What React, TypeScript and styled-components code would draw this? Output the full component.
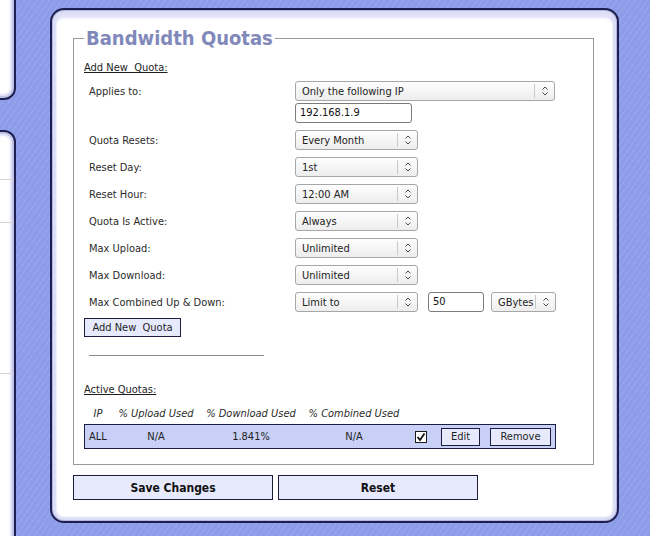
import React from "react";
import styled, { createGlobalStyle } from "styled-components";

const GlobalStyle = createGlobalStyle`
  html, body {
    margin: 0;
    padding: 0;
  }
  body {
    font-family: "DejaVu Sans Condensed", "DejaVu Sans", sans-serif;
    font-size: 11px;
    color: #2b2b2b;
  }
`;

const Page = styled.div`
  width: 650px;
  height: 536px;
  overflow: hidden;
  display: flex;
  align-items: flex-start;
  background-color: #8d9ce8;
  background-image: repeating-linear-gradient(
    125deg,
    rgba(255, 255, 255, 0.1) 0 1px,
    transparent 1px 5px
  );
`;

const SideColumn = styled.div`
  width: 16px;
  flex: none;
  display: flex;
  flex-direction: column;
  gap: 30px;
`;

const SideCard = styled.div<{ $height: number; $top?: number }>`
  width: 70px;
  height: ${({ $height }) => $height}px;
  margin-left: -54px;
  margin-top: ${({ $top }) => $top ?? 0}px;
  box-sizing: border-box;
  background: #fff;
  border: 2px solid #1e1e50;
  border-radius: 12px;
  box-shadow: inset 0 0 0 2px #c0c2ea, inset 0 0 2px 4px #e0e1f7;
  overflow: hidden;
`;

const SideRow = styled.div<{ $height: number }>`
  height: ${({ $height }) => $height}px;
  border-bottom: 1px solid #d4d4d4;
`;

const Panel = styled.div`
  flex: none;
  margin: 8px 0 0 34px;
  width: 569px;
  height: 515px;
  box-sizing: border-box;
  padding: 17px 0 0 21px;
  background: #fff;
  border: 2px solid #1e1e50;
  border-radius: 14px;
  box-shadow: inset 0 0 0 1px #b4b6e4, inset 0 0 2px 4px #dcddf6,
    inset 0 4px 2px 4px #e2e3f8;
`;

const Fieldset = styled.fieldset`
  margin: 0;
  width: 521px;
  box-sizing: border-box;
  padding: 0 10px 15px 10px;
  border: 1px solid #9a9a9a;
`;

const Legend = styled.legend`
  padding: 0 2px;
  font-size: 20px;
  line-height: 22px;
  font-weight: bold;
  color: #8188ba;
`;

const SectionTitle = styled.div<{ $top: number }>`
  margin-top: ${({ $top }) => $top}px;
  line-height: 14px;
  text-decoration: underline;
  color: #1e1e1e;
`;

const FormGrid = styled.div`
  margin-top: 6px;
  padding-left: 5px;
  display: grid;
  grid-template-columns: 206px auto;
  row-gap: 7px;
`;

const Label = styled.div`
  line-height: 20px;
  padding-top: 1px;
  height: 20px;
  box-sizing: border-box;
  color: #2b2b2b;
`;

const Controls = styled.div<{ $stack?: boolean }>`
  display: flex;
  flex-direction: ${({ $stack }) => ($stack ? "column" : "row")};
  align-items: flex-start;
  gap: ${({ $stack }) => ($stack ? 2 : 10)}px;
`;

const SelectBox = styled.div<{ $width: number; $shift?: number }>`
  width: ${({ $width }) => $width}px;
  margin-left: ${({ $shift }) => $shift ?? 0}px;
  height: 20px;
  box-sizing: border-box;
  display: flex;
  align-items: center;
  border: 1px solid #a7a7a7;
  border-radius: 3px;
  background: linear-gradient(#fefefe, #ededed);
  color: #222;
`;

const SelectValue = styled.span`
  flex: 1;
  padding-left: 6px;
  white-space: nowrap;
  overflow: hidden;
`;

const SelectArrow = styled.span`
  width: 19px;
  height: 14px;
  flex: none;
  display: flex;
  align-items: center;
  justify-content: center;
  border-left: 1px solid #c9c9c9;
`;

const TextBox = styled.div<{ $width: number }>`
  width: ${({ $width }) => $width}px;
  height: 20px;
  box-sizing: border-box;
  padding-left: 4px;
  line-height: 18px;
  border: 1px solid #7c7c7c;
  border-radius: 3px;
  background: #fff;
  color: #111;
`;

const PlainButton = styled.div<{ $width: number; $height: number }>`
  width: ${({ $width }) => $width}px;
  height: ${({ $height }) => $height}px;
  box-sizing: border-box;
  display: flex;
  align-items: center;
  justify-content: center;
  border: 1px solid #1c1c3c;
  background: #e6eafc;
  color: #1e1e1e;
`;

const AddButton = styled(PlainButton)`
  margin-top: 6px;
`;

const Divider = styled.div`
  margin: 18px 0 0 5px;
  width: 175px;
  height: 1px;
  background: #8c8c8c;
`;

const QuotaGrid = styled.div`
  display: grid;
  grid-template-columns: 26px 90px 100px 106px 28px auto;
  align-items: center;
  justify-items: center;
`;

const HeaderRow = styled(QuotaGrid)`
  margin-top: 10px;
  padding-left: 1px;
  width: 472px;
  line-height: 14px;
  font-style: italic;
  color: #2b2b2b;
`;

const QuotaRow = styled(QuotaGrid)`
  margin-top: 3px;
  width: 472px;
  height: 25px;
  box-sizing: border-box;
  border: 1px solid #1c1c3c;
  background: #c8d0f7;
  color: #1e1e1e;
`;

const RowActions = styled.div`
  justify-self: start;
  display: flex;
  gap: 10px;
  padding-left: 6px;
`;

const CheckBox = styled.span`
  width: 12px;
  height: 12px;
  box-sizing: border-box;
  display: flex;
  align-items: center;
  justify-content: center;
  border: 1px solid #1c1c1c;
  background: #fff;
`;

const FooterButtons = styled.div`
  margin-top: 10px;
  display: flex;
  gap: 5px;
`;

const BigButton = styled(PlainButton)`
  font-size: 12px;
  font-weight: bold;
  color: #111;
`;

const Chevrons = () => (
  <svg width="8" height="12" viewBox="0 0 8 12" fill="none" stroke="#4a4a4a" strokeWidth="1">
    <path d="M1.5 4.5 L4 2 L6.5 4.5" />
    <path d="M1.5 7.5 L4 10 L6.5 7.5" />
  </svg>
);

const Select: React.FC<{ value: string; width?: number; shift?: number }> = ({
  value,
  width = 123,
  shift,
}) => (
  <SelectBox $width={width} $shift={shift}>
    <SelectValue>{value}</SelectValue>
    <SelectArrow>
      <Chevrons />
    </SelectArrow>
  </SelectBox>
);

const rows: { label: string; value: string }[] = [
  { label: "Quota Resets:", value: "Every Month" },
  { label: "Reset Day:", value: "1st" },
  { label: "Reset Hour:", value: "12:00 AM" },
  { label: "Quota Is Active:", value: "Always" },
  { label: "Max Upload:", value: "Unlimited" },
  { label: "Max Download:", value: "Unlimited" },
];

export default function App() {
  return (
    <Page>
      <GlobalStyle />
      <SideColumn>
        <SideCard $height={130} $top={-30} />
        <SideCard $height={460}>
          <SideRow $height={47} />
          <SideRow $height={42} />
          <SideRow $height={150} />
        </SideCard>
      </SideColumn>

      <Panel>
        <Fieldset>
          <Legend>Bandwidth Quotas</Legend>
          <SectionTitle $top={12}>Add New&nbsp; Quota:</SectionTitle>

          <FormGrid>
            <Label>Applies to:</Label>
            <Controls $stack>
              <Select value="Only the following IP" width={260} />
              <TextBox $width={117}>192.168.1.9</TextBox>
            </Controls>

            {rows.map((r) => (
              <React.Fragment key={r.label}>
                <Label>{r.label}</Label>
                <Controls>
                  <Select value={r.value} />
                </Controls>
              </React.Fragment>
            ))}

            <Label>Max Combined Up &amp; Down:</Label>
            <Controls>
              <Select value="Limit to" />
              <TextBox $width={56}>50</TextBox>
              <Select value="GBytes" width={65} shift={-3} />
            </Controls>
          </FormGrid>

          <AddButton $width={97} $height={19}>
            Add New&nbsp; Quota
          </AddButton>

          <Divider />

          <SectionTitle $top={27}>Active Quotas:</SectionTitle>

          <HeaderRow>
            <span>IP</span>
            <span>% Upload Used</span>
            <span>% Download Used</span>
            <span>% Combined Used</span>
          </HeaderRow>

          <QuotaRow>
            <span>ALL</span>
            <span>N/A</span>
            <span>1.841%</span>
            <span>N/A</span>
            <CheckBox>
              <svg width="10" height="10" viewBox="0 0 10 10" fill="none" stroke="#111" strokeWidth="1.8">
                <path d="M1.5 5 L4 8 L8.5 1.5" />
              </svg>
            </CheckBox>
            <RowActions>
              <PlainButton $width={39} $height={18}>Edit</PlainButton>
              <PlainButton $width={61} $height={18}>Remove</PlainButton>
            </RowActions>
          </QuotaRow>
        </Fieldset>

        <FooterButtons>
          <BigButton $width={200} $height={25}>Save Changes</BigButton>
          <BigButton $width={200} $height={25}>Reset</BigButton>
        </FooterButtons>
      </Panel>
    </Page>
  );
}
